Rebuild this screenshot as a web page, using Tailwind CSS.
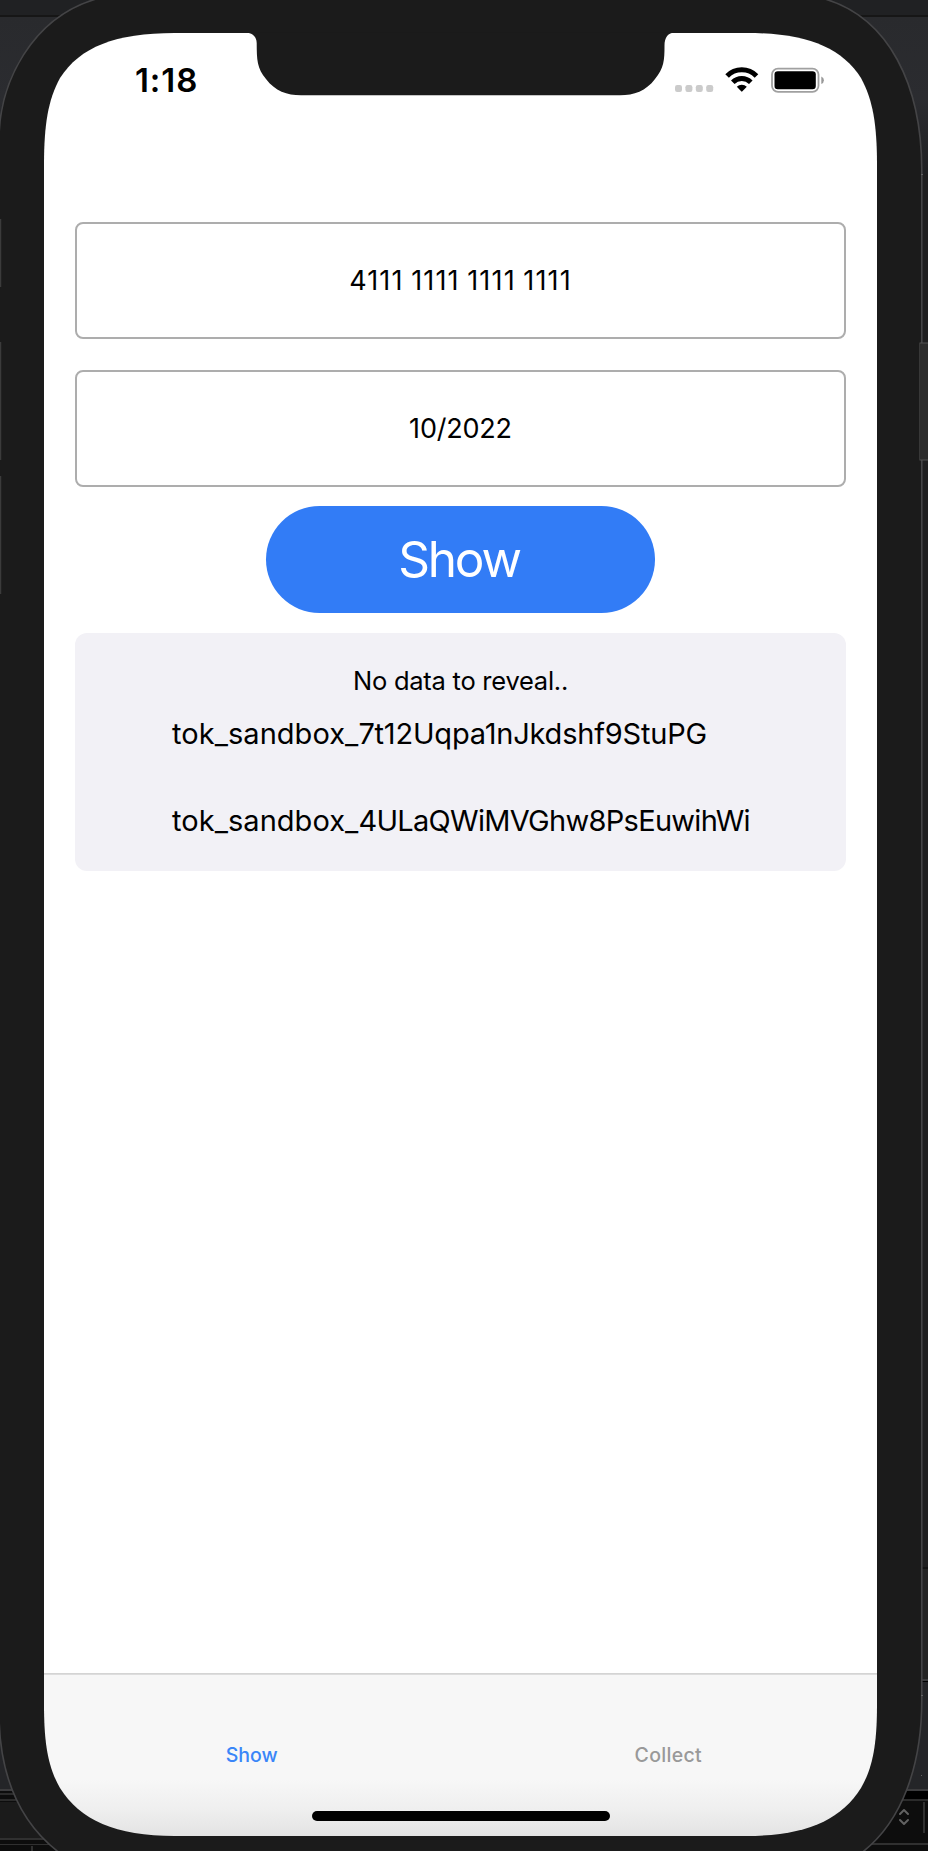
<!DOCTYPE html>
<html lang="en">
<head>
<meta charset="utf-8">
<title>Show</title>
<script src="https://cdn.jsdelivr.net/npm/@tailwindcss/browser@4"></script>
</head>
<body class="relative w-[928px] h-[1851px] overflow-hidden bg-[#242528] text-black" style="font-family: Inter, 'Liberation Sans', sans-serif">
<!-- desktop and device shell -->
<svg class="absolute inset-0" width="928" height="1851" viewBox="0 0 928 1851" fill="none">
  <defs>
    <linearGradient id="tab" x1="0" y1="1674" x2="0" y2="1836" gradientUnits="userSpaceOnUse">
      <stop offset="0" stop-color="#f7f7f7"/><stop offset=".65" stop-color="#f7f7f7"/><stop offset=".85" stop-color="#eeeeee"/><stop offset="1" stop-color="#e3e3e3"/>
    </linearGradient>
    <linearGradient id="desk" x1="0" y1="17" x2="0" y2="180" gradientUnits="userSpaceOnUse">
      <stop offset="0" stop-color="#292a2d"/><stop offset=".5" stop-color="#2b2c30"/><stop offset="1" stop-color="#1e1f21"/>
    </linearGradient>
    <clipPath id="screen"><path d="M44 165C44 125 48 100 60 78C80 47 115 33 175 33H746C806 33 841 47 861 78C873 100 877 125 877 165V1704C877 1744 873 1767 861 1788C841 1820 806 1836 746 1836H175C115 1836 80 1820 60 1788C48 1767 44 1744 44 1704Z"/></clipPath>
  </defs>
  <path fill="#202123" d="M0 0h928v15H0z"/>
  <path fill="#161616" d="M0 15h928v2H0z"/>
  <path fill="url(#desk)" d="M0 17h928v163H0z"/>
  <path fill="#1f1f20" d="M900 174h28v1393h-28z"/>
  <path fill="#141414" d="M900 1567h28v2h-28z"/>
  <path fill="#242424" d="M900 1569h28v110h-28z"/>
  <path fill="#3c3c3e" d="M900 1679h28v2h-28z"/>
  <path fill="#000" d="M900 1681h28v1h-28z"/>
  <path fill="#3c3c3e" d="M0 1789h928v2H0z"/>
  <path fill="#0d0d0d" d="M0 1791h928v60H0z"/>
  <path fill="#000" d="M800 1791h128v8H800z"/>
  <path fill="#2b2b2b" d="M0 1793h100v2H0zM0 1799h928v2H0z"/>
  <path fill="#1b1b1b" d="M0 1802h60v36H0z"/>
  <path fill="#303030" d="M0 1838h60v2H0zM0 1844h60v1H0zM860 1843h68v2h-68zM31 1846h2v5h-2zM923 1802h2v31h-2z"/>
  <path stroke="#626262" stroke-width="2" stroke-linecap="round" stroke-linejoin="round" d="M900 1814l4-4 4 4M900 1820l4 4 4-4"/>
  <path fill="#1b1b1b" stroke="#444446" stroke-width="1.6" d="M-1 140C-1 82 32 18 96-1H825C889 18 921.600 85 921.800 170V1700C921.800 1764 903 1822 860 1854H61C18 1822-1 1774-1 1712Z"/>
  <path fill="#2c2c2c" d="M919.500 343h8.500v117h-8.500z"/>
  <path stroke="#505050" d="M919.500 343h8.500M919.500 460h8.500"/>
  <path stroke="#383838" d="M919.500 343v117"/>
  <path stroke="#3b3b3b" stroke-width="1.500" d="M.5 219v68M.5 342v118M.5 476v118"/>
  <path stroke="#626264" d="M921 174.500h2M921 1775.500h1M921 1695.500h2"/>
  <g clip-path="url(#screen)">
    <path fill="#fff" d="M44 33h833v1641H44z"/>
    <path fill="url(#tab)" d="M44 1674h833v162H44z"/>
    <path fill="#d4d4d4" d="M44 1673h833v1.700H44z"/>
  </g>
  <path fill="#1b1b1b" d="M246 32.500C253 33 256.500 37 256.700 43C256.800 60 257 68 266 79C275 91 287 95.300 301 95.300H620C634 95.300 646 91 655 79C664 68 664.500 60 664.500 46C664.500 37 668 33 675 32.500Z"/>
</svg>
<main class="relative mx-[44px] w-[833px] h-[1851px] pt-[33px] flex flex-col">
  <header class="h-[189px] pt-[30px] pl-[91px] pr-[51px] flex items-start justify-between">
    <time class="text-[33px] leading-[34px] font-semibold whitespace-nowrap tracking-[0.9px]">1:18</time>
    <svg width="151" height="30" viewBox="0 0 151 30" class="mt-px">
      <g fill="#cbcbcb"><rect x="0" y="21" width="7" height="7" rx="2.200"/><rect x="10.400" y="21" width="7" height="7" rx="2.200"/><rect x="20.800" y="21" width="7" height="7" rx="2.200"/><rect x="31.200" y="21" width="7" height="7" rx="2.200"/></g>
      <g fill="none" stroke="#000" stroke-width="5"><path d="M52.100 11.900a20.500 20.500 0 0 1 29.400 0"/><path d="M57.800 18.200a12.600 12.600 0 0 1 18 0"/></g>
      <path d="M61.800 22.800a7.200 7.200 0 0 1 10 0l-4.400 4.500q-.6.700-1.200 0z"/>
      <rect x="97" y="4.600" width="46.500" height="23.200" rx="6" fill="none" stroke="#a0a0a0" stroke-width="1.800"/>
      <rect x="99.500" y="7.200" width="41.300" height="18" rx="3.300"/>
      <path fill="#999" d="M146.300 12.600q2.600 1 2.600 3.700t-2.600 3.700z"/>
    </svg>
  </header>
  <section class="px-[31px] flex flex-col items-center">
    <div class="w-full h-[117px] pt-[2px] border-2 border-[#adadad] rounded-lg flex items-center justify-center text-[27px] tracking-[1.15px] [word-spacing:-1.2px]">4111 1111 1111 1111</div>
    <div class="mt-[31px] w-full h-[117px] pt-[2px] border-2 border-[#adadad] rounded-lg flex items-center justify-center text-[27px] tracking-[-0.2px]">10/2022</div>
    <button class="mt-[19px] w-[389px] h-[107px] pr-[3px] rounded-full bg-[#327cf6] text-white text-[49.5px] flex items-center justify-center tracking-[-2.2px]">Show</button>
    <div class="mt-5 w-full h-[238px] rounded-xl bg-[#f2f1f6] pt-[32px] flex flex-col whitespace-nowrap">
      <p class="text-center text-[25.5px] leading-[32px] tracking-[-0.25px]">No data to reveal..</p>
      <p class="mt-[19px] pl-[97px] text-[29px] leading-[36px] tracking-[-0.2px]"><span class="tracking-[0.05px]">tok_sandbox_</span>7t12Uqpa1nJkdshf9StuPG</p>
      <p class="mt-[51px] pl-[97px] text-[29px] leading-[36px] tracking-[-0.7px]"><span class="tracking-[0.05px]">tok_sandbox_</span>4ULaQWiMVGhw8PsEuwihWi</p>
    </div>
  </section>
  <nav class="mt-auto h-[177px] pt-[69px] flex flex-col items-center">
    <div class="w-full grid grid-cols-2 text-center text-[19.5px] leading-[24px] font-medium">
      <a class="pr-px text-[#3a86f8]">Show</a>
      <a class="pr-px text-[#999999] tracking-[0.3px]">Collect</a>
    </div>
    <div class="mt-[44px] w-[298px] h-[10px] rounded-full bg-black"></div>
  </nav>
</main>
</body>
</html>
